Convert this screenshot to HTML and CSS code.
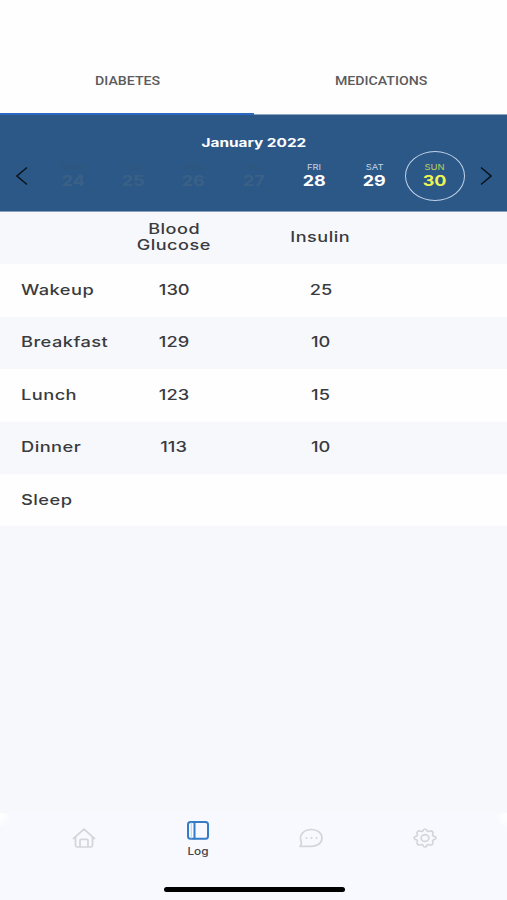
FILE: index.html
```html
<!DOCTYPE html>
<html lang="en">
<head>
<meta charset="utf-8">
<title>Log</title>
<link rel="stylesheet" href="styles.css">
</head>
<body>
<div class="app">
  <div class="tabs">
    <div class="tab active"><span>DIABETES</span></div>
    <div class="tab"><span>MEDICATIONS</span></div>
  </div>
  <div class="calendar">
    <div class="month"><span>January 2022</span></div>
    <div class="week">
      <svg class="arrow" width="12" height="20" viewBox="0 0 12 20"><path d="M11 1.500 1 10l10 8.500"/></svg>
      <div class="days">
        <div class="day off"><small>MON</small><b>24</b></div>
        <div class="day off"><small>TUE</small><b>25</b></div>
        <div class="day off"><small>WED</small><b>26</b></div>
        <div class="day off"><small>THU</small><b>27</b></div>
        <div class="day"><small>FRI</small><b>28</b></div>
        <div class="day"><small>SAT</small><b>29</b></div>
        <div class="day selected"><small>SUN</small><b>30</b></div>
      </div>
      <svg class="arrow" width="12" height="20" viewBox="0 0 12 20"><path d="M1 1.500 11 10 1 18.500"/></svg>
    </div>
  </div>
  <div class="log">
    <div class="row"><div></div><div class="cell head"><span>Blood</span><span>Glucose</span></div><div class="cell head"><span>Insulin</span></div></div>
    <div class="row"><div class="name"><span>Wakeup</span></div><div class="cell"><span>130</span></div><div class="cell"><span>25</span></div></div>
    <div class="row"><div class="name"><span>Breakfast</span></div><div class="cell"><span>129</span></div><div class="cell"><span>10</span></div></div>
    <div class="row"><div class="name"><span>Lunch</span></div><div class="cell"><span>123</span></div><div class="cell"><span>15</span></div></div>
    <div class="row"><div class="name"><span>Dinner</span></div><div class="cell"><span>113</span></div><div class="cell"><span>10</span></div></div>
    <div class="row"><div class="name"><span>Sleep</span></div><div class="cell"></div><div class="cell"></div></div>
  </div>
  <div class="bottom">
    <div class="nav">
      <div class="item home"><svg width="24" height="20" viewBox="0 0 24 20"><path d="M1.500 10.500 12 1.200l10.500 9.300M3.500 9v8.500q0 1.500 1.500 1.500h14q1.500 0 1.500-1.500V9M8 19v-6.500q0-1.200 1.200-1.200h5.600q1.200 0 1.200 1.200V19"/></svg></div>
      <div class="item on"><svg width="22" height="19" viewBox="0 0 22 19"><rect x="1" y="1" width="20" height="16.700" rx="2.500"/><path d="M7.500 1v16.500"/><path class="lines" d="M4.300 2v15"/></svg><span>Log</span></div>
      <div class="item"><svg width="24" height="20" viewBox="0 0 24 20"><path d="M1 18.300C2.500 17.300 2.700 15.500 1.900 12.800 0 6 5.500 1.500 12.500 1.500 18.500 1.500 23 5 23 10s-4.500 8.300-10.500 8.300z"/><path class="dots" d="M7.500 10h0M12.500 10h0M17.500 10h0"/></svg></div>
      <div class="item"><svg width="24" height="20" viewBox="0 0 24 20"><path d="M12 1Q13.500 1 14.300 3.100Q15 3.800 16.200 3.300Q18.500 2.500 19.500 3.700Q20.600 4.800 19.600 6.600Q19.200 7.600 20.500 8.200Q23 8.800 23 10Q23 11.200 20.500 11.800Q19.200 12.400 19.600 13.400Q20.600 15.200 19.500 16.300Q18.500 17.500 16.200 16.700Q15 16.200 14.300 16.900Q13.500 19 12 19Q10.500 19 9.700 16.900Q9 16.200 7.800 16.700Q5.500 17.500 4.500 16.300Q3.400 15.200 4.400 13.400Q4.800 12.400 3.500 11.800Q1 11.200 1 10Q1 8.800 3.500 8.200Q4.800 7.600 4.400 6.600Q3.400 4.800 4.500 3.700Q5.500 2.500 7.800 3.300Q9 3.800 9.700 3.100Q10.500 1 12 1z"/><ellipse cx="12" cy="10" rx="3.900" ry="3.400"/></svg></div>
    </div>
    <div class="home-bar"></div>
  </div>
</div>
</body>
</html>
```
FILE: styles.css
```css
* { box-sizing: border-box; }
body { margin: 0; font-family: Inter, "Liberation Sans", sans-serif; }
.app { width: 507px; height: 900px; background: #f6f8fc; display: flex; flex-direction: column; overflow: hidden; }
.tabs { height: 115px; flex: none; display: flex; background: #fefefe; border-bottom: 1px solid #8ca5c2; }
.tab { flex: 1; height: 115px; padding: 73px 0 0 1px; text-align: center; color: #5b5b5d; font: 500 12px/17px Roboto, sans-serif; }
.tab span { display: inline-block; transform: scaleX(1.18); }
.tab.active { border-bottom: 2px solid #2b68c4; }
.calendar { height: 97px; flex: none; background: #2c5888; border-bottom: 1px solid #86a0bd; padding-top: 18px; color: #fff; }
.month { text-align: center; font-weight: 700; font-size: 12px; line-height: 19px; height: 18px; }
.month span { display: inline-block; transform: scaleX(1.28); }
.week { display: flex; align-items: center; padding: 0 15px 0 16px; height: 50px; }
.arrow { fill: none; stroke: #0b131d; stroke-width: 1.500; flex: none; }
.days { flex: 1; display: flex; margin: 0 15px; }
.day { flex: 1; height: 50px; display: flex; flex-direction: column; align-items: center; padding-top: 10px; border: 1.500px solid transparent; border-radius: 50%; }
.day small { font-size: 8px; line-height: 10px; transform: scaleX(1.18); color: #c3d2e2; }
.day b { font-size: 14.500px; line-height: 17px; transform: scaleX(1.24); font-weight: 700; }
.day.off small { color: #305679; }
.day.off b { color: #3b6085; }
.day.selected { border: 1.500px solid #c0d3e8; }
.day.selected small { color: #b7cf59; }
.day.selected b { color: #edf552; }
.log { flex: none; }
.row { height: 52.400px; display: grid; grid-template-columns: 101px 146px 147px 1fr; align-items: center; color: #3a3b3f; font-weight: 550; font-size: 14.500px; line-height: 16px; padding-bottom: 1px; }
.row:nth-child(even) { background: #fefefe; }
.row span { display: inline-block; transform: scaleX(1.26); }
.name { padding-left: 21px; letter-spacing: .35px; }
.row .name span { transform-origin: left; }
.cell { text-align: center; }
.head { display: flex; flex-direction: column; align-items: center; letter-spacing: .4px; font-size: 14px; padding-bottom: 1px; }
.row .head span { transform: scaleX(1.29); }
.bottom { margin-top: auto; height: 87px; background: radial-gradient(circle at 0 4px, #fefefe 3px, transparent 11px), radial-gradient(circle at 507px 4px, #fefefe 3px, transparent 11px), #f8f9fe; display: flex; flex-direction: column; align-items: center; }
.nav { width: 455px; height: 50px; display: flex; margin-left: 1px; }
.item { flex: 1; display: flex; flex-direction: column; align-items: center; justify-content: center; }
.item svg { fill: none; stroke: #d5d5d9; stroke-width: 1.700; stroke-linejoin: round; stroke-linecap: round; }
.home { padding-left: 1px; }
.item .dots { stroke-width: 2; }
.item.on { padding-top: 2px; }
.item.on svg { stroke: #347cc7; stroke-width: 2; }
.item .lines { stroke: #b9d4ee; stroke-width: 1; }
.item span { margin-top: 4px; font-size: 10px; line-height: 14px; font-weight: 500; color: #434347; transform: scaleX(1.18); }
.home-bar { width: 181px; height: 5px; border-radius: 3px; background: #000; margin: 24px 0 0 1px; }
```
